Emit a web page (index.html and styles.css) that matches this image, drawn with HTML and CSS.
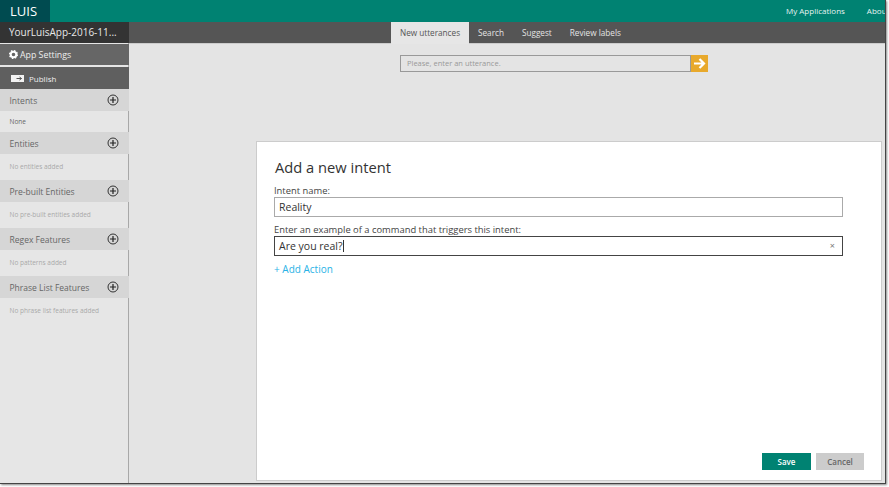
FILE: index.html
```html
<!DOCTYPE html>
<html lang="en">
<head>
  <meta charset="UTF-8" />
  <title>LUIS</title>
  <link rel="stylesheet" href="styles.css">
</head>
<body>
  <div class="window">
    <header class="topbar">
      <div class="logo">LUIS</div>
      <nav class="topnav">
        <a>My Applications</a>
        <a class="about">About</a>
      </nav>
    </header>
    <div class="content">
      <aside class="sidebar">
        <div class="app-name">YourLuisApp-2016-11...</div>
        <div class="app-btn settings">
          <svg class="gear" width="9" height="9" viewBox="0 0 18 18">
            <circle cx="9" cy="9" r="5.6" fill="none" stroke="#fff" stroke-width="4"/>
            <circle cx="9" cy="9" r="7.8" fill="none" stroke="#fff" stroke-width="2.6" stroke-dasharray="3.1 3"/>
          </svg>
          App Settings
        </div>
        <div class="app-btn publish">
          <svg class="pub-icon" width="13" height="7" viewBox="0 0 13 7">
            <rect width="13" height="7" fill="#f2f2f2"/>
            <path d="M5.5 3.5h5M8.5 2l2 1.5-2 1.5" fill="none" stroke="#555" stroke-width="1"/>
          </svg>
          Publish
        </div>

        <div class="sec-head"><span>Intents</span><svg class="plus" width="12" height="12" viewBox="0 0 12 12"><circle cx="6" cy="6" r="5" fill="none" stroke="#333"/><path d="M6 3v6M3 6h6" stroke="#222" stroke-width="1.2"/></svg></div>
        <div class="sec-body first">None</div>
        <div class="sec-head"><span>Entities</span><svg class="plus" width="12" height="12" viewBox="0 0 12 12"><circle cx="6" cy="6" r="5" fill="none" stroke="#333"/><path d="M6 3v6M3 6h6" stroke="#222" stroke-width="1.2"/></svg></div>
        <div class="sec-body">No entities added</div>
        <div class="sec-head"><span>Pre-built Entities</span><svg class="plus" width="12" height="12" viewBox="0 0 12 12"><circle cx="6" cy="6" r="5" fill="none" stroke="#333"/><path d="M6 3v6M3 6h6" stroke="#222" stroke-width="1.2"/></svg></div>
        <div class="sec-body">No pre-built entities added</div>
        <div class="sec-head"><span>Regex Features</span><svg class="plus" width="12" height="12" viewBox="0 0 12 12"><circle cx="6" cy="6" r="5" fill="none" stroke="#333"/><path d="M6 3v6M3 6h6" stroke="#222" stroke-width="1.2"/></svg></div>
        <div class="sec-body">No patterns added</div>
        <div class="sec-head"><span>Phrase List Features</span><svg class="plus" width="12" height="12" viewBox="0 0 12 12"><circle cx="6" cy="6" r="5" fill="none" stroke="#333"/><path d="M6 3v6M3 6h6" stroke="#222" stroke-width="1.2"/></svg></div>
        <div class="sec-body">No phrase list features added</div>
      </aside>

      <main class="main">
        <div class="tabs">
          <a class="tab active">New utterances</a>
          <a class="tab">Search</a>
          <a class="tab">Suggest</a>
          <a class="tab">Review labels</a>
        </div>
        <div class="utterance">
          <div class="utterance-input">Please, enter an utterance.</div>
          <div class="utterance-go">
            <svg width="13" height="11" viewBox="0 0 13 11"><path d="M1 5.5h10M6.5 1l4.5 4.5L6.5 10" fill="none" stroke="#fff" stroke-width="2.2"/></svg>
          </div>
        </div>

        <div class="dialog">
          <h2>Add a new intent</h2>
          <label>Intent name:</label>
          <div class="field">Reality</div>
          <label>Enter an example of a command that triggers this intent:</label>
          <div class="field focused"><span>Are you real?</span><i class="caret"></i><b class="clear">×</b></div>
          <a class="add-action">+ Add Action</a>
          <div class="buttons">
            <button class="save">Save</button>
            <button class="cancel">Cancel</button>
          </div>
        </div>
      </main>
    </div>
  </div>
</body>
</html>
```

FILE: styles.css
```css
html, body {
  margin: 0;
  padding: 0;
  background-color: #fff;
}
body {
  font-family: 'Open Sans', 'Noto Sans', sans-serif;
  width: 889px;
  height: 487px;
  overflow: hidden;
}
.window {
  width: 885px;
  height: 483px;
  display: flex;
  flex-direction: column;
  background-color: #e4e4e4;
  border-right: 1px solid #444;
  border-bottom: 1px solid #444;
  box-shadow: 1px 1px 2px #888;
  overflow: hidden;
}

/* top bar */
.topbar {
  height: 22px;
  flex: none;
  display: flex;
  justify-content: space-between;
  background-color: #008272;
}
.logo {
  width: 50px;
  background-color: #004b50;
  color: #fff;
  font-size: 13px;
  line-height: 22px;
  padding-left: 10px;
  box-sizing: border-box;
}
.topnav {
  display: flex;
  gap: 22px;
  width: 99px;
  color: #e6f3f1;
  font-size: 8px;
  line-height: 22px;
  white-space: nowrap;
}

.content {
  flex: 1;
  display: flex;
  min-height: 0;
}

/* sidebar */
.sidebar {
  width: 129px;
  flex: none;
  box-sizing: border-box;
  border-right: 1px solid #a8a8a8;
  background-color: #e6e6e6;
}
.app-name {
  height: 21px;
  margin-right: -1px;
  padding-left: 9px;
  background-color: #333;
  color: #e8e8e8;
  font-size: 10px;
  line-height: 21px;
  white-space: nowrap;
}
.app-btn {
  display: flex;
  align-items: center;
  margin-right: -1px;
  background-color: #666;
  color: #eee;
  white-space: nowrap;
}
.settings {
  height: 21px;
  margin-top: 1px;
  padding-left: 9px;
  font-size: 8.8px;
}
.gear {
  margin-right: 2px;
}
.publish {
  height: 22px;
  margin-top: 2px;
  padding-left: 11px;
  background-color: #5f5f5f;
  font-size: 8px;
}
.pub-icon {
  margin-right: 5px;
}
.sec-head {
  height: 22px;
  display: flex;
  align-items: center;
  justify-content: space-between;
  margin-right: -1px;
  padding: 0 10.5px 0 9.5px;
  background-color: #d6d6d6;
  color: #666;
  font-size: 8.5px;
}
.sec-body {
  height: 26px;
  padding-left: 9.5px;
  color: #a9a9a9;
  font-size: 6.5px;
  line-height: 25px;
}
.sec-body.first {
  height: 21px;
  color: #666;
  line-height: 21px;
}

/* main area */
.main {
  flex: 1;
  position: relative;
}
.tabs {
  height: 21px;
  display: flex;
  padding-left: 262px;
  background-color: #555;
  border-bottom: 1px solid #ccc;
}
.tab {
  padding: 0 9px;
  color: #e4e4e4;
  font-size: 8.2px;
  line-height: 21px;
}
.tab.active {
  height: 22px;
  background-color: #e6e6e6;
  color: #555;
}
.utterance {
  width: 308px;
  height: 17px;
  display: flex;
  margin: 11px 0 0 271px;
}
.utterance-input {
  flex: 1;
  box-sizing: border-box;
  border: 1px solid #999;
  color: #999;
  font-size: 7.5px;
  line-height: 15px;
  padding-left: 6px;
}
.utterance-go {
  width: 17px;
  display: flex;
  align-items: center;
  justify-content: center;
  background-color: #e8a92c;
}

/* add intent dialog */
.dialog {
  position: absolute;
  left: 127px;
  top: 119px;
  width: 626px;
  height: 340px;
  box-sizing: border-box;
  display: flex;
  flex-direction: column;
  padding: 0 38px 10px 17px;
  background-color: #fff;
  border: 1px solid #ccc;
}
.dialog h2 {
  margin: 15px 0 7px 1px;
  color: #333;
  font-size: 14.7px;
  font-weight: 400;
  line-height: 20px;
}
.dialog label {
  color: #444;
  font-size: 9.4px;
  line-height: 13px;
}
.field {
  height: 20px;
  flex: none;
  box-sizing: border-box;
  display: flex;
  align-items: center;
  margin-bottom: 6px;
  padding-left: 4px;
  border: 1px solid #aaa;
  color: #333;
  font-size: 10.5px;
}
.field.focused {
  position: relative;
  border-color: #444;
  margin-bottom: 0;
}
.caret {
  width: 1px;
  height: 12px;
  background-color: #333;
}
.clear {
  position: absolute;
  right: 7px;
  top: 2px;
  color: #777;
  font-size: 9px;
  font-weight: 400;
}
.add-action {
  margin: 6px 0 0 0;
  color: #29b2e6;
  font-size: 10px;
  line-height: 14px;
}
.buttons {
  display: flex;
  justify-content: flex-end;
  gap: 5px;
  margin-top: auto;
  margin-right: -21px;
}
.buttons button {
  width: 49px;
  height: 17px;
  padding: 0;
  border: none;
  font-family: inherit;
  font-size: 8px;
}
.buttons .cancel {
  width: 48px;
}
.save {
  background-color: #008272;
  color: #fff;
  font-weight: 600;
}
.cancel {
  background-color: #ccc;
  color: #666;
  font-weight: 600;
}
```
